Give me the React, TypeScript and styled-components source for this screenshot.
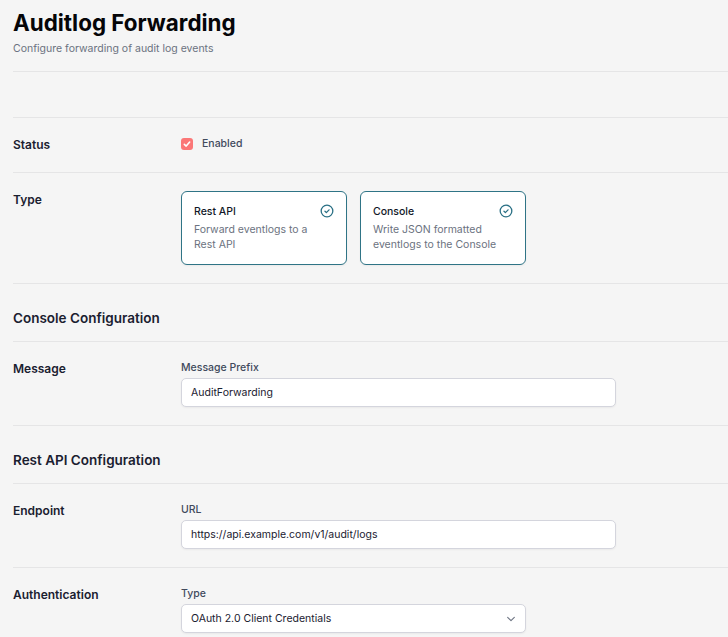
import React from "react";
import styled, { createGlobalStyle } from "styled-components";

const Global = createGlobalStyle`
  html, body { margin: 0; padding: 0; background: #f5f5f5; height: 100%; overflow: hidden; }
  body { font-family: Inter, "Noto Sans", sans-serif; }
  * { box-sizing: border-box; }
`;
const Page = styled.main`
  padding: 0 0 0 13px;
  height: 637px;
  overflow: hidden;
`;
const Header = styled.header`
  height: 72px;
  padding-top: 9px;
  border-bottom: 1px solid #e5e5e6;
`;
const Title = styled.h1`
  margin: 0;
  font-size: 22.4px;
  line-height: 28px;
  font-weight: 700;
  color: #050508;
`;
const Subtitle = styled.p`
  margin: 4px 0 0;
  font-size: 10.5px;
  line-height: 16px;
  color: #6b7280;
`;
const Spacer = styled.div`
  height: 46px;
  border-bottom: 1px solid #e5e5e6;
`;
const Row = styled.section<{ $h: number; $pt: number }>`
  display: grid;
  grid-template-columns: 168px 1fr;
  height: ${(p) => p.$h}px;
  padding-top: ${(p) => p.$pt}px;
  border-bottom: 1px solid #e5e5e6;
`;
const RowLabel = styled.div`
  font-size: 12px;
  line-height: 18px;
  font-weight: 600;
  color: #1a2030;
`;
const Heading = styled.h2`
  margin: 0;
  font-size: 13.5px;
  line-height: 20px;
  font-weight: 600;
  color: #1a2030;
`;
const HeadingRow = styled.section`
  height: 58px;
  padding-top: 24px;
  border-bottom: 1px solid #e5e5e6;
`;
const CheckLine = styled.label`
  display: flex;
  align-items: center;
  gap: 9px;
  height: 16px;
`;
const CheckBox = styled.span`
  width: 12px;
  height: 12px;
  border-radius: 3px;
  background: #fb7777;
  display: flex;
  align-items: center;
  justify-content: center;
`;
const CheckText = styled.span`
  font-size: 10.5px;
  line-height: 16px;
  font-weight: 500;
  color: #414a5c;
`;
const Cards = styled.div`
  display: flex;
  gap: 13px;
`;
const Card = styled.div`
  position: relative;
  width: 166px;
  height: 74px;
  background: #fff;
  border: 1px solid #2f7486;
  border-radius: 6px;
  padding: 12px 12px;
  box-shadow: 0 1px 2px rgba(0, 0, 0, 0.05);
`;
const CardTitle = styled.div`
  font-size: 10.5px;
  line-height: 15px;
  font-weight: 500;
  color: #111827;
  margin-bottom: 3px;
`;
const CardText = styled.div`
  font-size: 10.5px;
  line-height: 15px;
  color: #6b7280;
  max-width: 125px;
`;
const CardIcon = styled.svg`
  position: absolute;
  top: 12px;
  right: 12px;
  width: 14px;
  height: 14px;
`;
const Field = styled.div``;
const FieldLabel = styled.div`
  font-size: 10.5px;
  line-height: 15px;
  font-weight: 500;
  color: #414a5c;
  margin-bottom: 3px;
`;
const Control = styled.div<{ $w: number }>`
  width: ${(p) => p.$w}px;
  height: 29px;
  display: flex;
  align-items: center;
  justify-content: space-between;
  padding: 0 9px;
  background: #fff;
  border: 1px solid #d4d5dd;
  border-radius: 5px;
  font-size: 10.5px;
  color: #1a2030;
  box-shadow: 0 1px 2px rgba(0, 0, 0, 0.05);
`;

const Ring = () => (
  <CardIcon viewBox="0 0 24 24" fill="none" stroke="#2a7085" strokeWidth="2.2" strokeLinecap="round" strokeLinejoin="round">
    <circle cx="12" cy="12" r="10" />
    <path d="M8.5 12.5l2.4 2.2L15.5 10" />
  </CardIcon>
);

export default function App() {
  return (
    <Page>
      <Global />
      <Header>
        <Title>Auditlog Forwarding</Title>
        <Subtitle>Configure forwarding of audit log events</Subtitle>
      </Header>
      <Spacer />
      <Row $h={55} $pt={18}>
        <RowLabel>Status</RowLabel>
        <CheckLine>
          <CheckBox>
            <svg width="8" height="8" viewBox="0 0 12 12" fill="none" stroke="#fff" strokeWidth="2.4" strokeLinecap="round" strokeLinejoin="round">
              <path d="M2 6.5l2.8 2.6L10 3" />
            </svg>
          </CheckBox>
          <CheckText>Enabled</CheckText>
        </CheckLine>
      </Row>
      <Row $h={111} $pt={18}>
        <RowLabel>Type</RowLabel>
        <Cards>
          <Card>
            <CardTitle>Rest API</CardTitle>
            <CardText>Forward eventlogs to a Rest API</CardText>
            <Ring />
          </Card>
          <Card>
            <CardTitle>Console</CardTitle>
            <CardText>Write JSON formatted eventlogs to the Console</CardText>
            <Ring />
          </Card>
        </Cards>
      </Row>
      <HeadingRow>
        <Heading>Console Configuration</Heading>
      </HeadingRow>
      <Row $h={84} $pt={18}>
        <RowLabel>Message</RowLabel>
        <Field>
          <FieldLabel>Message Prefix</FieldLabel>
          <Control $w={435}>AuditForwarding</Control>
        </Field>
      </Row>
      <HeadingRow>
        <Heading>Rest API Configuration</Heading>
      </HeadingRow>
      <Row $h={84} $pt={18}>
        <RowLabel>Endpoint</RowLabel>
        <Field>
          <FieldLabel>URL</FieldLabel>
          <Control $w={435}>https://api.example.com/v1/audit/logs</Control>
        </Field>
      </Row>
      <Row $h={84} $pt={18}>
        <RowLabel>Authentication</RowLabel>
        <Field>
          <FieldLabel>Type</FieldLabel>
          <Control $w={345}>
            OAuth 2.0 Client Credentials
            <svg width="10" height="10" viewBox="0 0 12 12" fill="none" stroke="#6b7280" strokeWidth="1.3" strokeLinecap="round" strokeLinejoin="round">
              <path d="M2 4l4 4 4-4" />
            </svg>
          </Control>
        </Field>
      </Row>
    </Page>
  );
}
